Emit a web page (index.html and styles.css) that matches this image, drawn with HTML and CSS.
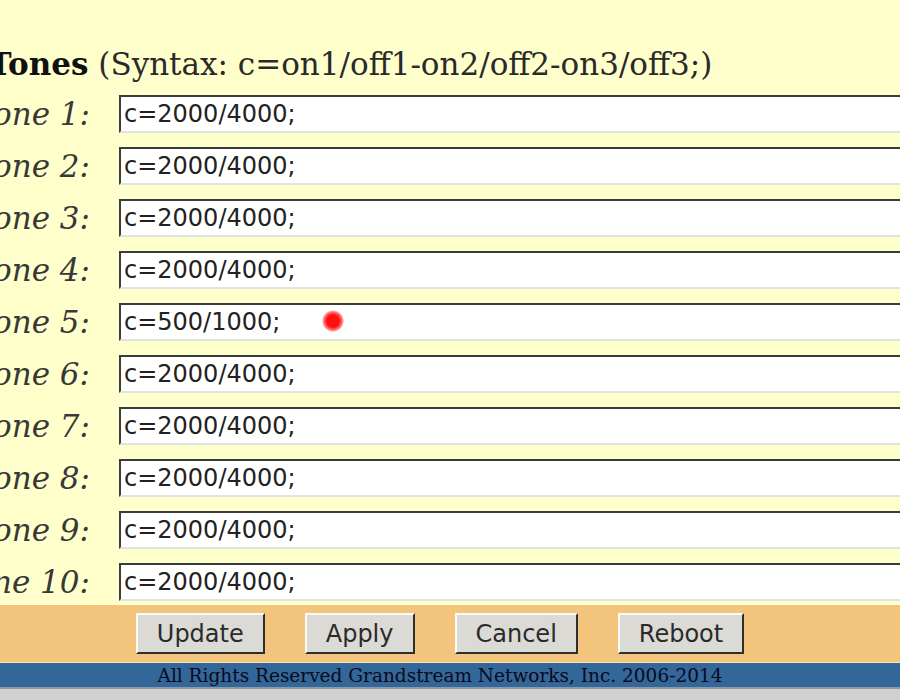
FILE: index.html
```html
<!DOCTYPE html>
<html lang="en">
<head>
  <meta charset="UTF-8">
  <title>Ring Tones - Grandstream Device Configuration</title>
  <link rel="stylesheet" href="styles.css">
</head>
<body>
  <div class="page">
    <div class="section-title">
      <b>Ring Tones</b> (Syntax: c=on1/off1-on2/off2-on3/off3;)
    </div>

    <div class="tone-grid">
      <label for="tone1">Ring Tone 1:</label>
      <input id="tone1" type="text" value="c=2000/4000;">
      <label for="tone2">Ring Tone 2:</label>
      <input id="tone2" type="text" value="c=2000/4000;">
      <label for="tone3">Ring Tone 3:</label>
      <input id="tone3" type="text" value="c=2000/4000;">
      <label for="tone4">Ring Tone 4:</label>
      <input id="tone4" type="text" value="c=2000/4000;">
      <label for="tone5">Ring Tone 5:</label>
      <div class="field">
        <input id="tone5" type="text" value="c=500/1000;">
        <span class="cursor-dot"></span>
      </div>
      <label for="tone6">Ring Tone 6:</label>
      <input id="tone6" type="text" value="c=2000/4000;">
      <label for="tone7">Ring Tone 7:</label>
      <input id="tone7" type="text" value="c=2000/4000;">
      <label for="tone8">Ring Tone 8:</label>
      <input id="tone8" type="text" value="c=2000/4000;">
      <label for="tone9">Ring Tone 9:</label>
      <input id="tone9" type="text" value="c=2000/4000;">
      <label for="tone10">Ring Tone 10:</label>
      <input id="tone10" type="text" value="c=2000/4000;">
    </div>

    <div class="actions">
      <button type="button">Update</button>
      <button type="button">Apply</button>
      <button type="button">Cancel</button>
      <button type="button">Reboot</button>
    </div>

    <div class="footer">All Rights Reserved Grandstream Networks, Inc. 2006-2014</div>
  </div>
  <div class="status-strip"></div>
</body>
</html>
```

FILE: styles.css
```css
* { box-sizing: border-box; }
html, body {
  height: 100%;
}
body {
  margin: 0;
  overflow: hidden;
  background-color: #ffffcc;
  font-family: "DejaVu Serif", serif;
  color: #1a1a1a;
}
.page {
  width: 1200px;
  margin-left: -160px;
}
.section-title {
  margin-top: 44px;
  margin-bottom: 11px;
  padding-left: 56px;
  font-size: 31px;
  line-height: 40px;
  color: #2a2a2a;
}
.section-title b {
  color: #111;
}
.tone-grid {
  display: grid;
  grid-template-columns: 279px 1fr;
  row-gap: 14px;
  align-items: center;
}
.tone-grid label {
  text-align: right;
  padding-right: 29px;
  font-style: italic;
  font-size: 31px;
  color: #383838;
  white-space: nowrap;
}
.tone-grid input {
  width: 100%;
  height: 38px;
  padding: 0 3px;
  border: 2px solid;
  border-color: #3c3c3c #e2e2e2 #e2e2e2 #3c3c3c;
  background: white;
  font-family: "DejaVu Sans", sans-serif;
  font-size: 24px;
  color: #222;
}
.field {
  position: relative;
}
.cursor-dot {
  position: absolute;
  left: 203px;
  top: 7px;
  width: 22px;
  height: 22px;
  border-radius: 50%;
  background: radial-gradient(circle, #ff1010 40%, rgba(255, 40, 40, 0.6) 60%, rgba(255, 60, 60, 0) 72%);
}
.actions {
  margin-top: 4px;
  display: flex;
  justify-content: center;
  gap: 40px;
  padding: 8px 0;
  background: #f3c47c;
}
.actions button {
  height: 41px;
  padding: 0 19px;
  border: 2px solid;
  border-color: #fafaf8 #2e2e2e #2e2e2e #fafaf8;
  background: #dcdad5;
  font-family: "DejaVu Sans", sans-serif;
  font-size: 24px;
  color: #2a2a2a;
}
.footer {
  border-top: 1px solid #fbe6b4;
  height: 25px;
  background: #336699;
  text-align: center;
  font-size: 18.5px;
  line-height: 25px;
  color: #0a0a1e;
}
.status-strip {
  height: 100%;
  border-top: 2px solid #8a9aa8;
  background: #d0d0d0;
}
```
